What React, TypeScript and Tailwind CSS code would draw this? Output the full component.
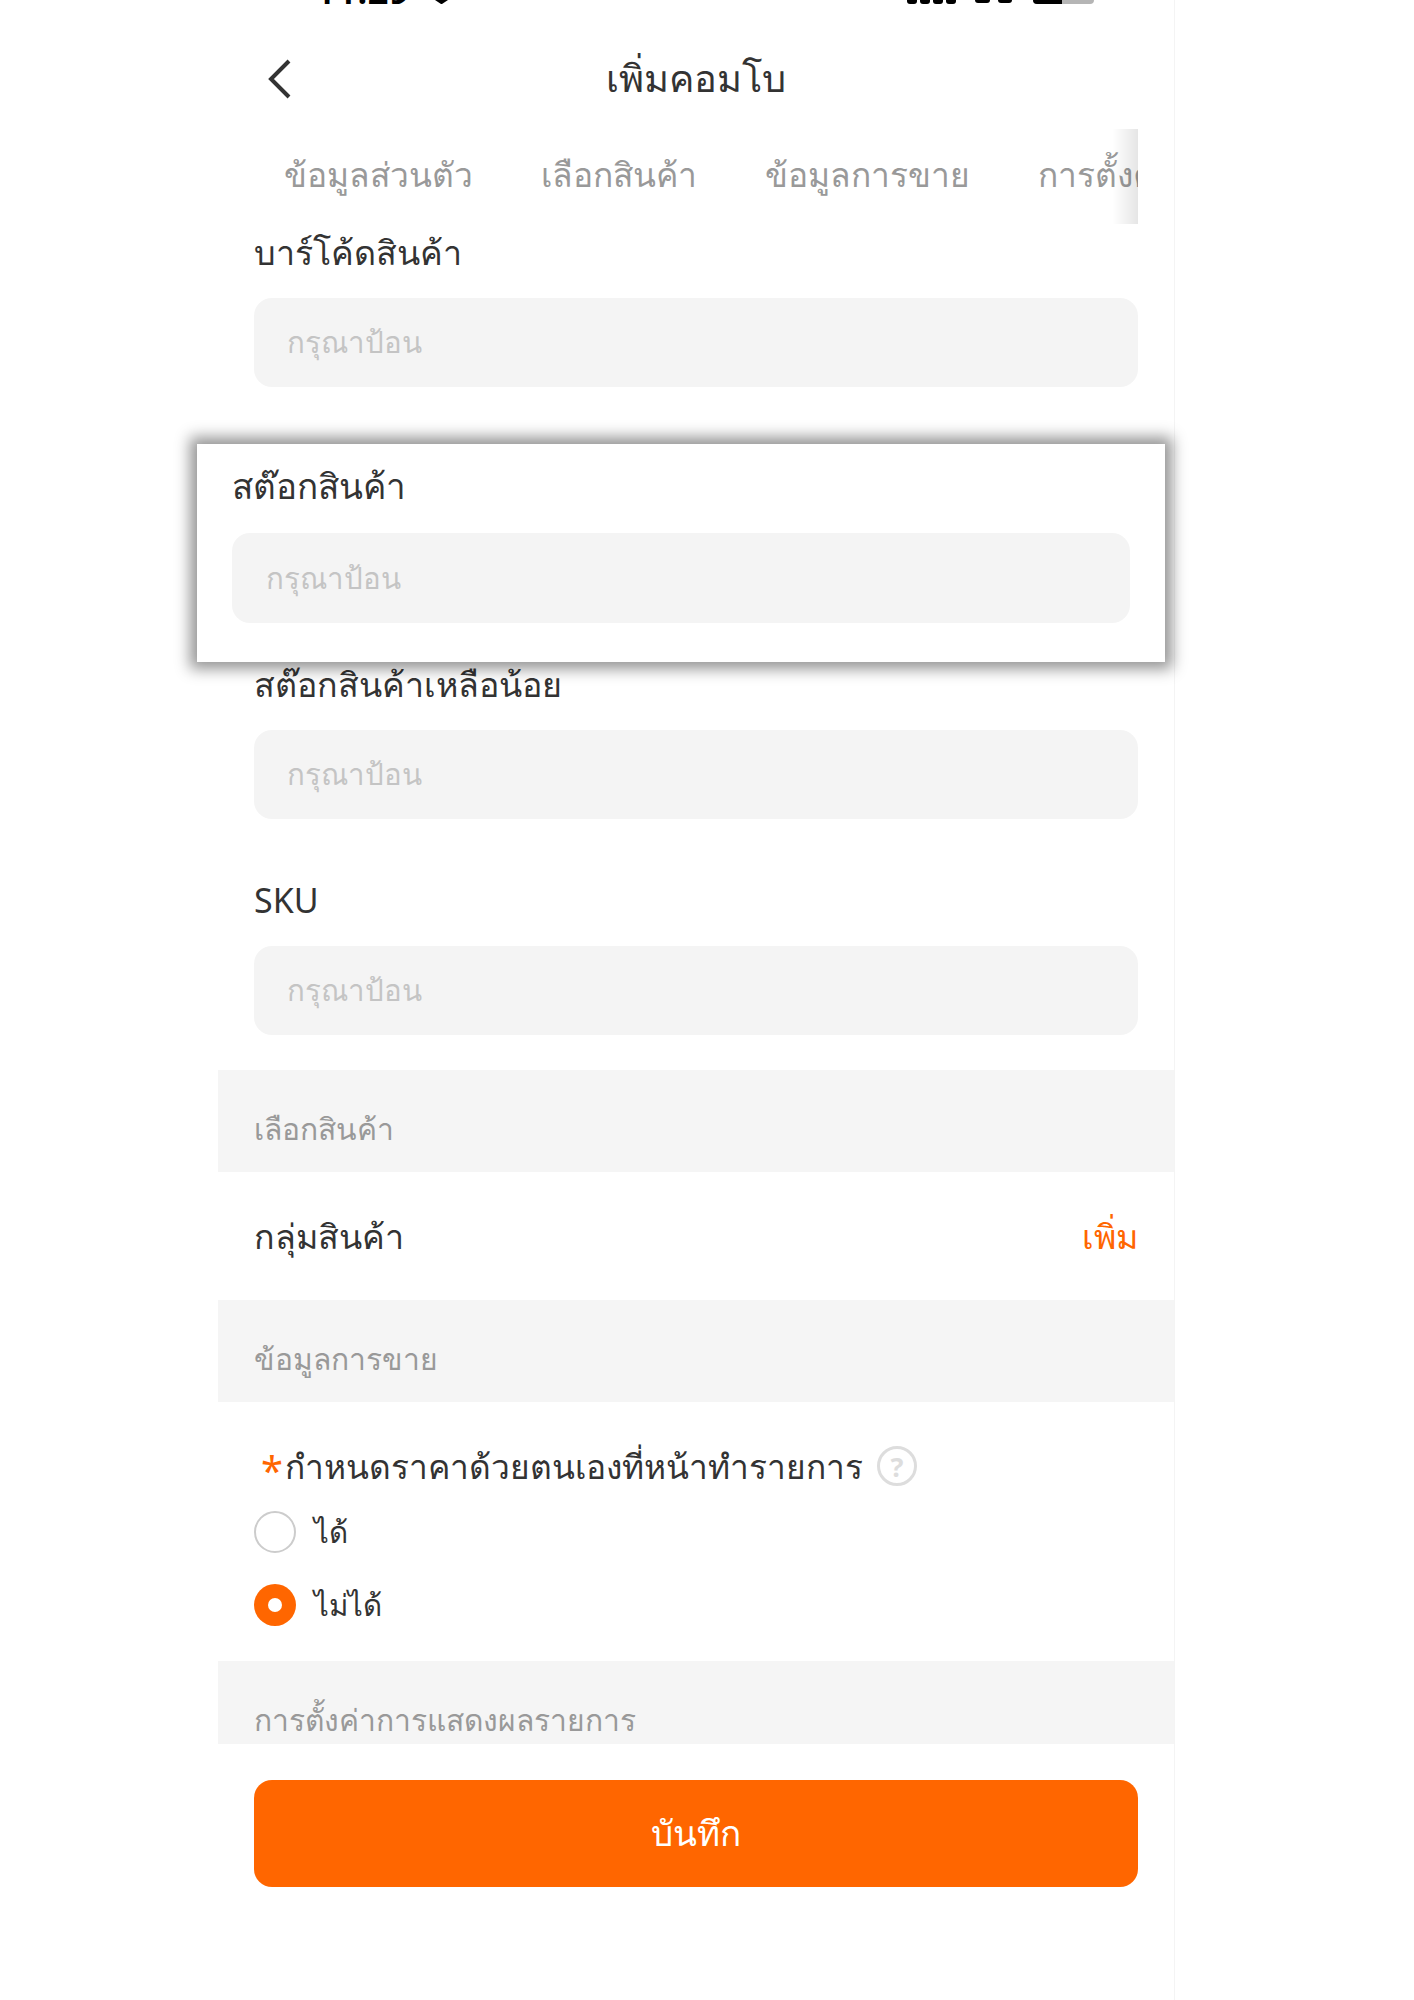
const font = { fontFamily: '"Noto Sans", "Liberation Sans", sans-serif' }

function Field({ label, h = "h-[216px]" }: { label: string; h?: string }) {
  return (
    <div className={`${h} px-9`}>
      <div className="mb-[23px] flex h-[46px] items-center text-[34px] leading-none text-[#333]">{label}</div>
      <div className="flex h-[89px] items-center rounded-[18px] bg-[#f4f4f4] px-[33px] text-[29.5px] text-[#c4c4c4]">กรุณาป้อน</div>
    </div>
  )
}

function SectionTitle({ title, h = "h-[102px]" }: { title: string; h?: string }) {
  return <div className={`${h} overflow-hidden bg-[#f5f5f5] px-9 pt-[39px] text-[30px] leading-[40px] text-[#999]`}>{title}</div>
}

export default function App() {
  return (
    <div className="relative h-[2000px] w-full overflow-hidden bg-white" style={font}>
      <div className="ml-[218px] h-full w-[957px] border-r border-[#f4f4f4]">
        {/* status bar, cut off by the top of the screenshot */}
        <div className="relative h-[5px] overflow-hidden">
          <div className="absolute top-[-29px] left-[97px] text-[37px] leading-none font-semibold text-black">11:29</div>
          <svg className="absolute top-0 left-[217px]" width="13" height="4" viewBox="0 0 13 4">
            <path d="M0 0H13L7 4H6Z" fill="#000" />
          </svg>
          <div className="absolute top-0 left-[689px] flex gap-[3px]">
            <span className="h-[4px] w-[10px] rounded-b-[3px] bg-black" />
            <span className="h-[4px] w-[10px] rounded-b-[3px] bg-black" />
            <span className="h-[4px] w-[10px] rounded-b-[3px] bg-black" />
            <span className="h-[4px] w-[10px] rounded-b-[3px] bg-black" />
          </div>
          <div className="absolute top-0 left-[757px] flex gap-[8px]">
            <span className="h-[3px] w-[15px] rounded-b-full bg-black" />
            <span className="h-[3px] w-[14px] rounded-b-full bg-black" />
          </div>
          <div className="absolute top-0 left-[815px] flex h-[4px] w-[61px] overflow-hidden rounded-b-[8px] bg-[#b5b5b5]">
            <span className="w-[29px] bg-black" />
          </div>
        </div>

        <div className="relative flex h-[124px] items-center justify-center pt-[20px] text-[38px] text-[#333]">
          <svg className="absolute top-[54px] left-[49px]" width="24" height="40" viewBox="0 0 24 40" fill="none">
            <path d="M22 2 L4 20 L22 38" stroke="#333" strokeWidth="4" />
          </svg>
          <span>เพิ่มคอมโบ</span>
        </div>

        <div className="relative mr-9 flex h-[95px] items-center gap-[68px] overflow-hidden pb-[5px] pl-[66px] text-[33.5px] whitespace-nowrap text-[#999]">
          <span>ข้อมูลส่วนตัว</span>
          <span>เลือกสินค้า</span>
          <span>ข้อมูลการขาย</span>
          <span>การตั้งค่า</span>
          <div className="absolute inset-y-0 right-0 w-[26px] bg-gradient-to-r from-transparent to-black/10" />
        </div>

        <div className="pt-[5px]">
          <Field label="บาร์โค้ดสินค้า" />
          <Field label="สต๊อกสินค้า" />
          <Field label="สต๊อกสินค้าเหลือน้อย" />
          <Field label="SKU" h="h-[193px]" />
        </div>

        <SectionTitle title="เลือกสินค้า" />
        <div className="flex h-[128px] items-center justify-between px-9 text-[34px] text-[#333]">
          <span>กลุ่มสินค้า</span>
          <span className="text-[#ff6600]">เพิ่ม</span>
        </div>
        <SectionTitle title="ข้อมูลการขาย" />

        <div className="h-[259px] px-9 pt-[41px]">
          <div className="flex h-[46px] items-center text-[33.5px] text-[#333]">
            <span className="mt-2 mr-[2px] ml-[7px] text-[40px] leading-none text-[#ff6600]">*</span>
            <span>กำหนดราคาด้วยตนเองที่หน้าทำรายการ</span>
            <span className="ml-[14px] flex h-[40px] w-[40px] items-center justify-center rounded-full border-[3px] border-[#ddd] text-[27px] leading-none font-bold text-[#ddd]">?</span>
          </div>
          <div className="mt-[12px] flex h-[62px] items-center gap-[18px] text-[29.5px] text-[#333]">
            <span className="h-[42px] w-[42px] rounded-full border-2 border-[#ccc]" />
            <span>ได้</span>
          </div>
          <div className="mt-[11px] flex h-[62px] items-center gap-[18px] text-[29.5px] text-[#333]">
            <span className="flex h-[42px] w-[42px] items-center justify-center rounded-full bg-[#ff6600]">
              <span className="h-[14px] w-[14px] rounded-full bg-white" />
            </span>
            <span>ไม่ได้</span>
          </div>
        </div>

        <SectionTitle title="การตั้งค่าการแสดงผลรายการ" h="h-[83px]" />

        <div className="px-9 pt-9">
          <div className="flex h-[107px] items-center justify-center rounded-[18px] bg-[#ff6600] text-[35px] text-white">บันทึก</div>
        </div>
      </div>

      {/* enlarged box pasted over the stock field */}
      <div className="absolute top-[444px] left-[197px] h-[218px] w-[968px] bg-white px-[35px] shadow-[0_0_14px_7px_rgba(0,0,0,0.42)]">
        <div className="flex h-[89px] items-center pb-[6px] text-[35px] leading-none text-[#333]">สต๊อกสินค้า</div>
        <div className="flex h-[90px] items-center rounded-[18px] bg-[#f4f4f4] px-[34px] text-[29.5px] text-[#c4c4c4]">กรุณาป้อน</div>
      </div>
    </div>
  )
}
